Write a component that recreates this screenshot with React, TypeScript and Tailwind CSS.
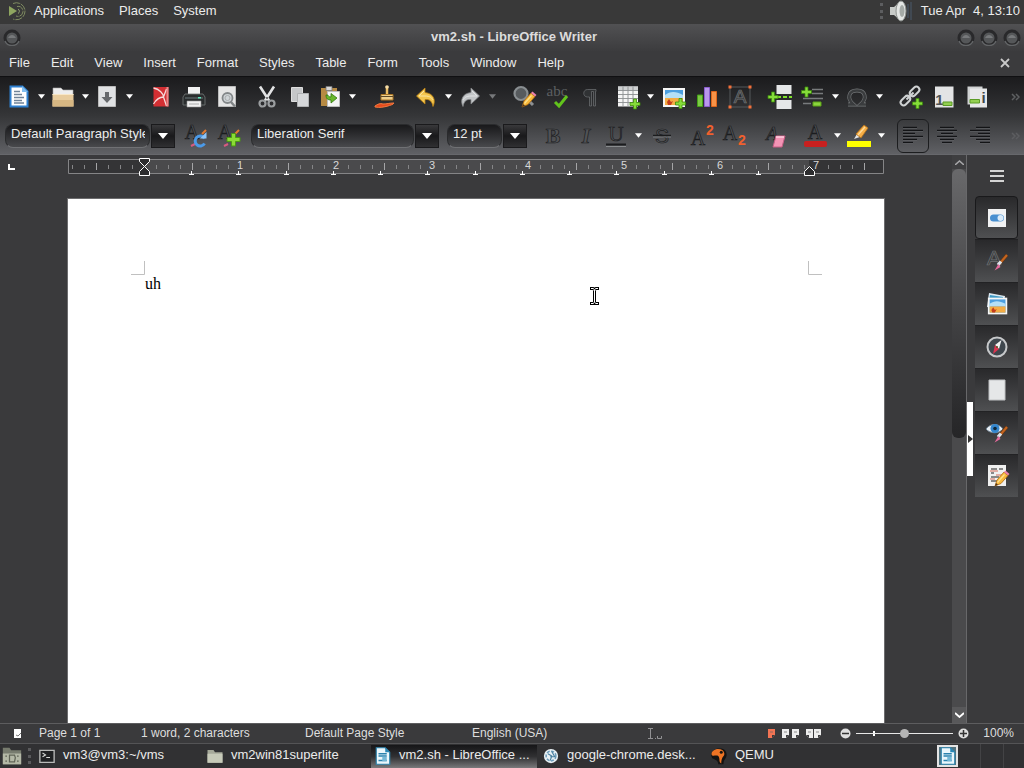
import type { ReactNode } from "react";
import { clsx } from "clsx";

const MENUS = ["File", "Edit", "View", "Insert", "Format", "Styles", "Table", "Form", "Tools", "Window", "Help"];

function Svg({ children, size = 24 }: { children: ReactNode; size?: number }) {
  return (
    <svg width={size} height={size} viewBox="0 0 24 24" fill="none" aria-hidden="true" className="shrink-0 overflow-visible">
      {children}
    </svg>
  );
}

function Plus({ x, y }: { x: number; y: number }) {
  return (
    <path
      d={`M${x - 1.5} ${y - 5}h3v3.5h3.5v3h-3.5v3.5h-3v-3.5h-3.5v-3h3.5z`}
      fill="#86dc3a"
      stroke="#3c8a0c"
      strokeWidth="0.8"
    />
  );
}

function Brush() {
  return (
    <g>
      <path d="M22 6l-8 9" stroke="#5a3417" strokeWidth="3.4" />
      <path d="M22 6l-6 7" stroke="#c4641f" strokeWidth="2.2" />
      <path d="M16 12.5l-3 3.5" stroke="#dde3ea" strokeWidth="3.2" />
      <path d="M13.5 15l-4 6.5 6-3.5z" fill="#e56a9c" />
    </g>
  );
}

function Pencil() {
  return (
    <g>
      <path d="M10 22l2-6 7-8 4 3.5-7 8z" fill="#f8b93c" stroke="#b06a10" strokeWidth="0.8" />
      <path d="M12.5 18.5l7-8" stroke="#fde28e" strokeWidth="1.2" />
      <path d="M19 8l1.5-1.5 4 3.5-1.5 1.5z" fill="#ee82ad" />
      <path d="M10 22l1-3 2 1.8z" fill="#4a3420" />
    </g>
  );
}

function Photo() {
  return (
    <g>
      <path d="M1 3h22v19H1z" fill="#f7f7f7" />
      <path d="M3 5h18v15H3z" fill="#4c9fe0" />
      <path d="M3 10c5-4 11-4 18 0v3H3z" fill="#b5e0f7" />
      <path d="M3 13h18v7H3z" fill="#f4ad45" />
      <path d="M5 17l2-3 2 3 2-1-2 4H6z" fill="#c43d1c" />
    </g>
  );
}

type GlyphProps = { x: number; y: number; size: number; children: string; className?: string; light?: boolean; sans?: boolean };

// Outlined letters, dark rim on the bright toolbar and bright rim on the dark one
function Glyph({ x, y, size, children, className, light, sans }: GlyphProps) {
  return (
    <text
      x={x}
      y={y}
      fontSize={size}
      textAnchor="middle"
      className={clsx(sans ? "font-['Liberation_Sans',sans-serif]" : "font-['Liberation_Serif',serif]", className)}
      fill={light ? "#3a3c3e" : "#505255"}
      stroke={light ? "#6f7274" : "#1b1c1e"}
      strokeWidth="0.7"
    >
      {children}
    </text>
  );
}

const newDocIcon = (
  <Svg>
    <path d="M3.5 1.5h12l5 5v15h-17z" fill="#fff" stroke="#2f80d0" strokeWidth="2" />
    <path d="M15 1v6h6z" fill="#83bff0" />
    <path d="M7 6.5h6M7 9.5h8M7 12.5h10M7 15.5h8M7 18h10" stroke="#708398" strokeWidth="1.3" />
  </Svg>
);

const folderIcon = (
  <Svg>
    <path d="M2 3h8l2 2h10v5H2z" fill="#eee" stroke="#aaa" strokeWidth="0.6" />
    <path d="M1.5 9h21v12.5h-21z" fill="#e8cc9e" />
    <path d="M1.5 15h21v6.5h-21z" fill="#d7b783" />
    <path d="M1.5 9.5h21" stroke="#f8e7c8" />
  </Svg>
);

const saveIcon = (
  <Svg>
    <path d="M3.5 1.5h17v20h-17z" fill="#e0e2e4" stroke="#bbb" />
    <path d="M10 7h4v5h3.5L12 18l-5.5-6H10z" fill="#66696c" />
  </Svg>
);

const pdfIcon = (
  <Svg>
    <path d="M4.5 2h15v19.5h-15z" fill="#d32f33" />
    <path d="M4.5 3c6 1 10 6 10 9M4.5 19c3-5 6-7 10-7M14.5 12l3 9M14.5 12l3-8" stroke="#f4dada" strokeWidth="1.3" />
    <path d="M17.5 2h2v19.5h-2z" fill="#e9888a" />
  </Svg>
);

const printIcon = (
  <Svg>
    <path d="M6 2h12v8H6z" fill="#f2f2f2" />
    <path d="M3 9h18l2 3v8H1v-8z" fill="#2a2d2e" stroke="#73787a" strokeWidth="0.8" />
    <path d="M3 12h18v2H3z" fill="#4b5355" />
    <path d="M16 12h3v1.5h-3z" fill="#5ce8bd" />
    <path d="M5 16h14v6H5z" fill="#f1f1f1" stroke="#999" strokeWidth="0.6" />
    <path d="M7 19h10" stroke="#aaa" />
  </Svg>
);

const previewIcon = (
  <Svg>
    <path d="M3.5 1.5h17v20h-17z" fill="#e5e5e5" stroke="#bcbcbc" />
    <circle cx="12.5" cy="13" r="5" fill="#cfd4d7" stroke="#838789" strokeWidth="1.8" />
    <circle cx="12.5" cy="13" r="2.5" stroke="#a9acae" />
    <path d="M16 17l4 4.5" stroke="#808486" strokeWidth="2.4" />
  </Svg>
);

const cutIcon = (
  <Svg>
    <path d="M5 1.5l9 14M19 1.5l-9 14" stroke="#e3e4e5" strokeWidth="2.6" />
    <path d="M12 12v2" stroke="#555" strokeWidth="1.5" />
    <circle cx="7.5" cy="18.5" r="3" stroke="#9b9ea0" strokeWidth="2.2" />
    <circle cx="16.5" cy="18.5" r="3" stroke="#9b9ea0" strokeWidth="2.2" />
  </Svg>
);

const copyIcon = (
  <Svg>
    <path d="M3.5 2.5h11v14h-11z" fill="#c5c7c9" stroke="#dedede" />
    <path d="M9.5 8.5h11v13h-11z" fill="#d6d8da" stroke="#b0b2b4" />
  </Svg>
);

const pasteIcon = (
  <Svg>
    <path d="M3 3h16v18H3z" fill="#b68a43" />
    <path d="M8 1.5h6v4H8z" fill="#d8d8d8" stroke="#777" strokeWidth="0.8" />
    <path d="M9.5 6.5h12v15h-12z" fill="#f5f5f5" stroke="#bdbdbd" />
    <path d="M8 10c0 4 2 5 5 5v3l6-5-6-4.5V12c-2 0-3-1-3-2z" fill="#68b72c" stroke="#31780e" strokeWidth="0.8" />
  </Svg>
);

const cloneIcon = (
  <Svg>
    <path d="M13 1v9" stroke="#edbd63" strokeWidth="2.5" />
    <circle cx="13" cy="2" r="1.8" fill="#f5dda7" />
    <path d="M7 9.5h12v5.5H7z" fill="#efcf8b" stroke="#a87425" />
    <path d="M7 11.5h12" stroke="#5b4828" />
    <path d="M1 21c3-2 5-3 8-2 4 0 6-1 11-1-1 2-4 2-6 3-4 1-8 2-13 1z" fill="#e54a1c" stroke="#f07a40" />
  </Svg>
);

const undoIcon = (
  <Svg>
    <path d="M11 3L2.5 11l8.5 8v-4.5c5-.5 7 2 8 7 3-6 1-13-8-14z" fill="#f4c64e" stroke="#bd8314" strokeWidth="0.8" />
    <path d="M10 6l-5 5h6c5 0 7 2 8 4" stroke="#fbe7a4" />
  </Svg>
);

const redoIcon = (
  <Svg>
    <path d="M13 3l8.5 8-8.5 8v-4.5c-5-.5-7 2-8 7-3-6-1-13 8-14z" fill="#c2c5c7" stroke="#85888a" strokeWidth="0.8" />
    <path d="M14 6l5 5h-6c-5 0-7 2-8 4" stroke="#e2e4e5" />
  </Svg>
);

const findIcon = (
  <Svg>
    <circle cx="9" cy="8.5" r="6.5" fill="#575b5e" stroke="#898e91" strokeWidth="2.2" />
    <path d="M14 13l7 7" stroke="#8c8f91" strokeWidth="3" />
    <Pencil />
  </Svg>
);

const spellIcon = (
  <Svg>
    <text x="12" y="11" fontSize="15" textAnchor="middle" fill="#5c5f61" className="font-['Liberation_Serif',serif]">
      abc
    </text>
    <path d="M10 17l4 4 8-10" stroke="#62c41c" strokeWidth="3" />
  </Svg>
);

const pilcrowIcon = (
  <Svg>
    <path d="M18 4.5H9.5c-5 0-5 7.500 0 7.500h2v9h2V6.500h2V21h2V6.500H18z" fill="#303234" stroke="#707375" strokeWidth="0.7" />
  </Svg>
);

const tableIcon = (
  <Svg>
    <path d="M2 1.5h20v20H2z" fill="#f5f5f5" />
    <path d="M2 1.5h20v4H2z" fill="#cfd1d2" />
    <path d="M2 5.5h20M2 9.5h20M2 13.5h20M2 17.5h20M7 1.5v20M12 1.5v20M17 1.5v20" stroke="#8b8e90" strokeWidth="0.9" />
    <Plus x={19} y={19} />
  </Svg>
);

const imageIcon = (
  <Svg>
    <Photo />
    <Plus x={18.5} y={18.5} />
  </Svg>
);

const chartIcon = (
  <Svg>
    <path d="M2.5 10h5v11.5h-5z" fill="#7cca45" stroke="#45a017" />
    <path d="M9.5 2.5h5v19h-5z" fill="#b998eb" stroke="#8c5ed0" />
    <path d="M16.5 6.5h5v15h-5z" fill="#f79348" stroke="#de651a" />
  </Svg>
);

const textBoxIcon = (
  <Svg>
    <path d="M2 2h20v20H2z" stroke="#55585a" />
    <Glyph x={12} y={18} size={19} light sans>A</Glyph>
    <path d="M.5 .5h3v3h-3zM20.5 .5h3v3h-3zM.5 20.5h3v3h-3zM20.5 20.5h3v3h-3z" fill="#f3703a" />
  </Svg>
);

const pageBreakIcon = (
  <Svg>
    <path d="M8.5 0h15v9h-15zM8.5 15h15v9h-15z" fill="#e5e7e8" />
    <path d="M9 12h15" stroke="#7ee02c" strokeWidth="2.2" strokeDasharray="4 2" />
    <Plus x={5} y={12} />
  </Svg>
);

const fieldIcon = (
  <Svg>
    <path d="M11 4.5h11M11 8.5h11M2 13.5h20M2 18.5h8" stroke="#787b7d" strokeWidth="1.4" />
    <path d="M12 17h8v4h-8z" fill="#8bd33e" stroke="#5ca517" />
    <Plus x={5.5} y={7} />
  </Svg>
);

const omegaIcon = (
  <Svg>
    <path d="M3 19.5h5.5c-7-6-5-14 3.5-14s10.5 8 3.5 14H21" stroke="#75787a" strokeWidth="3.8" />
    <path d="M3 19.5h5.5c-7-6-5-14 3.5-14s10.5 8 3.5 14H21" stroke="#3a3c3e" strokeWidth="2.6" />
  </Svg>
);

const linkIcon = (
  <Svg>
    <g transform="rotate(-45 11 11)" stroke="#d0d3d4" strokeWidth="2">
      <rect x="-1" y="8" width="11" height="6" rx="3" />
      <rect x="12" y="8" width="11" height="6" rx="3" />
      <path d="M6 11h10" />
    </g>
    <Plus x={18.5} y={18.5} />
  </Svg>
);

const footnoteIcon = (
  <Svg>
    <path d="M3 1.5h18.5v21H3z" fill="#e3e4e5" />
    <text x="7.5" y="20" fontSize="15" fontWeight="bold" textAnchor="middle" fill="#4e5356">1</text>
    <path d="M11 17h9v3.5h-9z" fill="#93cf51" stroke="#5b9b25" />
  </Svg>
);

const endnoteIcon = (
  <Svg>
    <path d="M2.5 1.5h15v18h-15z" fill="#d0d2d3" />
    <path d="M5 3.5h17v19H5z" fill="#e7e8e9" />
    <text x="18.5" y="18" fontSize="15" fontWeight="bold" textAnchor="middle" fill="#3f4447">i</text>
    <path d="M5 14.5h9.5V18H5z" fill="#93cf51" stroke="#5b9b25" />
  </Svg>
);

const updateStyleIcon = (
  <Svg>
    <Glyph x={8} y={15} size={20}>A</Glyph>
    <path d="M18 10l4-4" stroke="#e07a30" strokeWidth="2" />
    <path d="M7 22l4-2" stroke="#d85b80" strokeWidth="2" />
    <path d="M20.5 14.5a5 5 0 1 0 0 5" stroke="#4b9ae8" strokeWidth="3" />
    <path d="M16 14.5h6.5V8z" fill="#8cc4f8" />
  </Svg>
);

const newStyleIcon = (
  <Svg>
    <Glyph x={8} y={15} size={20}>A</Glyph>
    <path d="M18 10l4-4" stroke="#e07a30" strokeWidth="2" />
    <path d="M7 22l4-2" stroke="#d85b80" strokeWidth="2" />
    <path d="M14.5 9.5h4v4h4.5v4h-4.5V22h-4v-4.5H10v-4h4.500z" fill="#8bdc36" stroke="#4b9b13" />
  </Svg>
);

const boldIcon = (
  <Svg>
    <Glyph x={12} y={19} size={22} className="font-bold">B</Glyph>
  </Svg>
);

const italicIcon = (
  <Svg>
    <Glyph x={12} y={19} size={22} className="font-bold italic">I</Glyph>
  </Svg>
);

const underlineIcon = (
  <Svg>
    <Glyph x={12} y={17} size={21}>U</Glyph>
    <path d="M2 20.5h20" stroke="#1b1c1e" strokeWidth="2" />
    <path d="M2 22.5h20" stroke="#898c8e" />
  </Svg>
);

const strikeIcon = (
  <Svg>
    <Glyph x={12} y={19} size={21} sans>S</Glyph>
    <path d="M3 11.5h18" stroke="#1b1c1e" strokeWidth="1.5" />
    <path d="M3 13h18" stroke="#7c7f81" />
  </Svg>
);

const superIcon = (
  <Svg>
    <Glyph x={8} y={21} size={20}>A</Glyph>
    <text x="20" y="11" fontSize="14" fontWeight="bold" textAnchor="middle" fill="#f0602d">2</text>
  </Svg>
);

const subIcon = (
  <Svg>
    <Glyph x={7} y={16} size={20}>A</Glyph>
    <text x="19" y="21" fontSize="14" fontWeight="bold" textAnchor="middle" fill="#f0602d">2</text>
  </Svg>
);

const clearIcon = (
  <Svg>
    <Glyph x={9} y={16} size={19} className="italic">A</Glyph>
    <path d="M13 12h9l-3 11h-9z" fill="#f394b5" stroke="#c95f86" />
    <path d="M13 13h8" stroke="#ffd2e2" strokeWidth="1.5" />
  </Svg>
);

const fontColorIcon = (
  <Svg>
    <Glyph x={12} y={15} size={20}>A</Glyph>
    <rect x="1" y="17" width="23" height="6" rx="2" fill="#c8201f" />
  </Svg>
);

const highlightIcon = (
  <Svg>
    <path d="M7 15l3-5 3 3z" fill="#e4e4e4" />
    <path d="M9 10l8-9 4 3-7 10z" fill="#f6ae46" stroke="#b4711a" strokeWidth="0.8" />
    <path d="M11 11l7-8" stroke="#ffdc9b" strokeWidth="1.3" />
    <path d="M0 17h24v6H0z" fill="#ff0" />
  </Svg>
);

function AlignIcon({ mode }: { mode: "left" | "center" | "right" }) {
  const widths = [14, 20, 12, 20, 14, 10];
  return (
    <Svg>
      {widths.map((w, i) => {
        const x = mode === "left" ? 2 : mode === "center" ? 12 - w / 2 : 22 - w;
        return (
          <g key={i}>
            <path d={`M${x} ${3.5 + i * 3}h${w}`} stroke="#131416" strokeWidth="1.4" />
            <path d={`M${x} ${4.5 + i * 3}h${w}`} stroke="#696c6f" strokeWidth="0.6" />
          </g>
        );
      })}
    </Svg>
  );
}

type Tool = { label: string; icon?: ReactNode; gap?: string; dim?: boolean };

// Tools without an icon are the drop-down arrows of the tool before them
const STANDARD: Tool[] = [
  { label: "New", icon: newDocIcon, gap: "ml-0" },
  { label: "New options" },
  { label: "Open", icon: folderIcon, gap: "ml-1" },
  { label: "Open options" },
  { label: "Save", icon: saveIcon, gap: "ml-1" },
  { label: "Save options" },
  { label: "Export as PDF", icon: pdfIcon, gap: "ml-3.5" },
  { label: "Print", icon: printIcon },
  { label: "Print preview", icon: previewIcon },
  { label: "Cut", icon: cutIcon, gap: "ml-4" },
  { label: "Copy", icon: copyIcon },
  { label: "Paste", icon: pasteIcon, gap: "ml-1.5" },
  { label: "Paste options" },
  { label: "Clone formatting", icon: cloneIcon, gap: "ml-4" },
  { label: "Undo", icon: undoIcon, gap: "ml-4" },
  { label: "Undo options" },
  { label: "Redo", icon: redoIcon, gap: "ml-1" },
  { label: "Redo options", dim: true },
  { label: "Find and replace", icon: findIcon, gap: "ml-3.5" },
  { label: "Spelling", icon: spellIcon },
  { label: "Formatting marks", icon: pilcrowIcon },
  { label: "Insert table", icon: tableIcon, gap: "ml-3.5" },
  { label: "Table options" },
  { label: "Insert image", icon: imageIcon, gap: "ml-1.5" },
  { label: "Insert chart", icon: chartIcon },
  { label: "Insert text box", icon: textBoxIcon },
  { label: "Insert page break", icon: pageBreakIcon, gap: "ml-4" },
  { label: "Insert field", icon: fieldIcon },
  { label: "Field options" },
  { label: "Special character", icon: omegaIcon, gap: "ml-1" },
  { label: "Special character options" },
  { label: "Insert hyperlink", icon: linkIcon, gap: "ml-3.5" },
  { label: "Insert footnote", icon: footnoteIcon },
  { label: "Insert endnote", icon: endnoteIcon },
];

const FORMATTING: Tool[] = [
  { label: "Bold", icon: boldIcon, gap: "ml-3.5" },
  { label: "Italic", icon: italicIcon },
  { label: "Underline", icon: underlineIcon, gap: "ml-1.5" },
  { label: "Underline options" },
  { label: "Strikethrough", icon: strikeIcon, gap: "ml-1.5" },
  { label: "Superscript", icon: superIcon, gap: "ml-4" },
  { label: "Subscript", icon: subIcon },
  { label: "Clear formatting", icon: clearIcon, gap: "ml-4" },
  { label: "Font color", icon: fontColorIcon, gap: "ml-4" },
  { label: "Font color options" },
  { label: "Highlighting", icon: highlightIcon, gap: "ml-1" },
  { label: "Highlighting options" },
];

function ToolButton({ label, icon, gap, dim }: Tool) {
  if (!icon) {
    return (
      <button type="button" aria-label={label} className="ml-1 flex h-6 w-3 shrink-0 items-center justify-center">
        <svg width="7" height="5" viewBox="0 0 8 5" className={dim ? "text-[#77797b]" : "text-white"}>
          <path d="M0 0h8L4 5z" fill="currentColor" />
        </svg>
      </button>
    );
  }
  return (
    <button type="button" aria-label={label} className={clsx("h-6 w-6 shrink-0", gap ?? "ml-[9px]")}>
      {icon}
    </button>
  );
}

function Combo({ label, value, className }: { label: string; value: string; className: string }) {
  return (
    <div className={clsx("flex h-6 shrink-0 gap-px", className)}>
      <input
        type="text"
        aria-label={label}
        defaultValue={value}
        className="min-w-0 flex-1 rounded-lg border border-[#2a2b2d] border-b-[#707174] bg-linear-to-b from-[#19191b] to-[#48494c] pr-1 pb-1 pl-[5px] text-[13px] text-[#ececec] outline-none"
      />
      <button
        type="button"
        aria-label={label + " list"}
        className="flex w-6 shrink-0 items-center justify-center border border-[#1a1a1c] bg-linear-to-b from-[#39393b] via-[#19191b] to-[#303032]"
      >
        <svg width="10" height="6" viewBox="0 0 10 6">
          <path d="M0 0h10L5 6z" fill="#fff" />
        </svg>
      </button>
    </div>
  );
}

function Overflow({ dim }: { dim?: boolean }) {
  return (
    <button type="button" aria-label="More tools" className={clsx("ml-auto pr-1", dim ? "text-[#5c5d60]" : "text-[#5e6062]")}>
      <svg width="9" height="8" viewBox="0 0 9 8" fill="none" stroke="currentColor" strokeWidth="1.5">
        <path d="M1 1l3 3-3 3M5 1l3 3-3 3" />
      </svg>
    </button>
  );
}

function WindowDot({ label }: { label: string }) {
  return (
    <button type="button" aria-label={label} className="h-5 w-5">
      <svg width="20" height="20" viewBox="0 0 20 20" fill="none">
        <circle cx="10" cy="10" r="7" fill="#555759" stroke="#29292b" strokeWidth="3" />
        <path d="M3 13c2 6 12 6 14 0" stroke="#626466" strokeWidth="1.5" />
        <path d="M6 10c2-4 6-4 8 0z" fill="#77797b" />
      </svg>
    </button>
  );
}

function TopPanel() {
  return (
    <header className="flex h-6 shrink-0 items-center bg-[#393939] pb-0.5 pl-2">
      <svg width="20" height="20" viewBox="0 0 20 20" fill="none" className="mr-1.5 shrink-0" aria-hidden="true">
        <path d="M1 5l8 5-8 5z" fill="#8fa660" />
        <path d="M5 2.500a8.500 8.500 0 1 1 0 15.500M9 5.500a5 5 0 1 1-1 9.500" stroke="#7f8c61" strokeDasharray="7 1" />
        <path d="M10 8a2.500 2.500 0 0 1 0 4.500" stroke="#8e9b70" />
      </svg>
      <nav className="flex gap-[15px]">
        <button type="button">Applications</button>
        <button type="button">Places</button>
        <button type="button">System</button>
      </nav>
      <div className="ml-auto flex items-center pr-1">
        <span className="mr-1.5 h-4 border-l-3 border-dotted border-[#5d5e60]" />
        <svg width="24" height="24" viewBox="0 0 24 24" className="mr-2" role="img" aria-label="Volume">
          <path d="M1 8h5v8H1zM5 8l7-6v20l-7-6z" fill="#c8cbc8" />
          <ellipse cx="12" cy="12" rx="5" ry="10" fill="#e4e6e4" stroke="#8d918e" />
          <ellipse cx="13" cy="12" rx="2.5" ry="6" fill="#a5aaa6" />
          <path d="M19 5v14M22 3v18" stroke="#4a5b6c" />
        </svg>
        <time className="whitespace-pre">Tue Apr  4, 13:10</time>
      </div>
    </header>
  );
}

function TitleBar() {
  return (
    <div className="grid h-[27px] shrink-0 grid-cols-[1fr_auto_1fr] items-center bg-linear-to-b from-[#515153] to-[#3c3c3e] px-0.5">
      <div className="flex">
        <WindowDot label="Window menu" />
      </div>
      <h1 className="pb-0.5 pl-1 font-bold text-[#dcdcdc]">vm2.sh - LibreOffice Writer</h1>
      <div className="flex justify-end gap-[3px]">
        <WindowDot label="Minimize" />
        <WindowDot label="Maximize" />
        <WindowDot label="Close" />
      </div>
    </div>
  );
}

function MenuBar() {
  return (
    <nav className="flex h-[26px] shrink-0 items-center border-b border-[#101012] bg-[#3b3b3d] px-[9px] pb-0.5">
      <div className="flex gap-[21px]">
        {MENUS.map((m) => (
          <button key={m} type="button">
            {m}
          </button>
        ))}
      </div>
      <button type="button" aria-label="Close document" className="ml-auto px-[5px]">
        <svg width="10" height="10" viewBox="0 0 10 10" stroke="#c9c9c9" strokeWidth="1.8">
          <path d="M1 1l8 8M9 1L1 9" />
        </svg>
      </button>
    </nav>
  );
}

function Toolbars() {
  return (
    <div className="flex shrink-0 flex-col border-b border-[#67686c] bg-linear-to-b from-[#1b1b1d] via-[#353638] to-[#606165]">
      <div className="flex h-10 items-center pb-px pl-[7px]">
        {STANDARD.map((t) => (
          <ToolButton key={t.label} {...t} />
        ))}
        <Overflow />
      </div>
      <div className="flex h-[37px] items-center pl-[5px]">
        <Combo label="Paragraph style" value="Default Paragraph Style" className="w-[170px]" />
        <ToolButton label="Update style" icon={updateStyleIcon} />
        <ToolButton label="New style" icon={newStyleIcon} />
        <Combo label="Font name" value="Liberation Serif" className="ml-2.5 w-[188px]" />
        <Combo label="Font size" value="12 pt" className="ml-2 w-20" />
        {FORMATTING.map((t) => (
          <ToolButton key={t.label} {...t} />
        ))}
        <button
          type="button"
          aria-label="Align left"
          aria-pressed="true"
          className="ml-2.5 flex h-[34px] w-8 shrink-0 items-center justify-center rounded-md border border-[#1c1d1f]"
        >
          <AlignIcon mode="left" />
        </button>
        <ToolButton label="Center" icon={<AlignIcon mode="center" />} gap="ml-1.5" />
        <ToolButton label="Align right" icon={<AlignIcon mode="right" />} />
        <Overflow dim />
      </div>
    </div>
  );
}

function Ruler() {
  const ticks = Array.from({ length: 67 }, (_, i) => i - 6);
  const tabs = Array.from({ length: 13 }, (_, i) => 123 + Math.round(i * 47.25));
  return (
    <svg width="816" height="20" viewBox="0 0 816 20" fill="none" role="img" aria-label="Ruler">
      <path d="M.5 2.500h815v14H.5z" fill="#343436" stroke="#858587" />
      <path d="M76 3h665v13H76z" fill="#4a4a4c" />
      {ticks.map((i) => {
        if (i >= 0 && i % 8 === 0) return null;
        const half = i % 4 === 0;
        return <path key={i} d={`M${76.5 + i * 12} ${half ? 6 : 8}v${half ? 7 : 4}`} stroke={half ? "#a5a5a7" : "#858587"} />;
      })}
      {[1, 2, 3, 4, 5, 6, 7].map((n) => (
        <text key={n} x={76 + n * 96} y="12" fontSize="11" textAnchor="middle" fill="#d8d8d8">
          {n}
        </text>
      ))}
      {tabs.map((x) => (
        <path key={x} d={`M${x + 0.5} 14v3M${x - 2} 17.500h5`} stroke="#fff" />
      ))}
      <path d="M71.500 1.500h10v3l-5 5-5-5zM71.500 18.500h10v-4l-5-5-5 5z" fill="#2d2d2f" stroke="#fff" />
      <path d="M736.500 18.500h10v-4l-5-5-5 5z" fill="#2d2d2f" stroke="#fff" />
    </svg>
  );
}

function DocumentArea() {
  return (
    <main className="flex min-w-0 flex-1 flex-col bg-[#3a3a3c]">
      <div className="grid shrink-0 grid-cols-[1fr_auto_1fr] pt-0.5">
        <button type="button" aria-label="Tab type" className="pl-2 text-left">
          <svg width="7" height="7" viewBox="0 0 7 7">
            <path d="M0 0h2v4h5v2H0z" fill="#fff" />
          </svg>
        </button>
        <Ruler />
      </div>
      <div className="flex min-h-0 flex-1 justify-center overflow-hidden pt-[21px]">
        <article className="relative w-[818px] border border-b-0 border-[#6c6c6e] bg-white px-[77px] pt-[73px] font-['Liberation_Serif','Times_New_Roman',serif] text-base text-black">
          <p>uh</p>
          <svg width="14" height="14" className="absolute top-[62px] left-[63px]" fill="none" stroke="#c0c0c0">
            <path d="M13.5 0v13.5H0" />
          </svg>
          <svg width="14" height="14" className="absolute top-[62px] right-[62px]" fill="none" stroke="#c0c0c0">
            <path d="M.5 0v13.5H14" />
          </svg>
          <svg width="9" height="18" viewBox="0 0 9 18" className="absolute top-[88px] left-[522px]" fill="none">
            <path d="M0 1.500h3l1.500 1L6 1.500h3M4.500 2v14M0 16.500h3l1.500-1 1.500 1h3" stroke="#000" strokeWidth="3" />
            <path d="M1 1.500h2l1.500 1L6 1.500h2M4.500 3v12M1 16.500h2l1.500-1 1.500 1h2" stroke="#fff" />
          </svg>
        </article>
      </div>
    </main>
  );
}

function Scrollbar() {
  return (
    <div className="flex w-[15px] shrink-0 flex-col border-r border-[#68686a] bg-[#4a4a4c]">
      <button type="button" aria-label="Scroll up" className="flex h-3.5 items-center justify-center bg-[#3e3e40]">
        <svg width="9" height="5" viewBox="0 0 9 5" fill="none" stroke="#a7a7a9" strokeWidth="1.5">
          <path d="M0 5l4.500-4L9 5" />
        </svg>
      </button>
      <div className="min-h-0 flex-1">
        <div className="h-1/2 rounded-md bg-linear-to-b from-[#69696b] via-[#454547] to-[#252527]" />
      </div>
      <button type="button" aria-label="Scroll down" className="flex h-4 items-center justify-center bg-[#58585a]">
        <svg width="9" height="6" viewBox="0 0 9 6" fill="none" stroke="#fff" strokeWidth="1.8">
          <path d="M0 1l4.500 4L9 1" />
        </svg>
      </button>
    </div>
  );
}

const DECKS = [
  {
    label: "Properties",
    icon: (
      <Svg>
        <path d="M3 3h18v18H3z" fill="#f1f2f3" />
        <rect x="5" y="8.5" width="14" height="7" rx="3.5" fill="#488fd0" />
        <circle cx="15.5" cy="12" r="3" fill="#d9eaf8" />
      </Svg>
    ),
  },
  {
    label: "Styles",
    icon: (
      <Svg>
        <Glyph x={9} y={16} size={21} light sans>A</Glyph>
        <Brush />
      </Svg>
    ),
  },
  {
    label: "Gallery",
    icon: (
      <Svg>
        <path d="M4 1l16 3-2 14L2 15z" fill="#dce9f2" />
        <path d="M5 3l13 2v3H4z" fill="#3f9ac6" />
        <g transform="translate(2 3) scale(.88)">
          <Photo />
        </g>
      </Svg>
    ),
  },
  {
    label: "Navigator",
    icon: (
      <Svg>
        <circle cx="12" cy="12" r="9.5" fill="#3f474e" stroke="#c7c9cb" strokeWidth="2" />
        <path d="M16.5 5L14 14l-4-4z" fill="#f0f1f2" />
        <path d="M8 19l2-9 4 4z" fill="#dc3550" />
        <circle cx="12" cy="12" r="1" fill="#552" />
      </Svg>
    ),
  },
  {
    label: "Page",
    icon: (
      <Svg>
        <path d="M4 2h16v20H4z" fill="#e5e7e8" stroke="#bfc1c3" />
      </Svg>
    ),
  },
  {
    label: "Style inspector",
    icon: (
      <Svg>
        <path d="M1 8c4-6 13-6 17 0-4 5-13 5-17 0z" fill="#e9eff4" stroke="#708291" />
        <circle cx="10" cy="7.5" r="4.5" fill="#3587ce" />
        <circle cx="10" cy="7.5" r="1.8" fill="#102839" />
        <Brush />
      </Svg>
    ),
  },
  {
    label: "Manage changes",
    icon: (
      <Svg>
        <path d="M3 1h18v21H3z" fill="#f0f0f0" />
        <path d="M6 5h6M14 5h4M6 9h3M6 13h8M6 17h6" stroke="#666" strokeWidth="1.5" />
        <path d="M5 7h8M11 11h7M5 15h5" stroke="#d66a59" />
        <Pencil />
      </Svg>
    ),
  },
];

function Sidebar() {
  return (
    <aside className="flex w-[57px] shrink-0 bg-[#3a3a3c]">
      <button type="button" aria-label="Hide sidebar" className="flex h-[74px] w-1.5 items-center self-center bg-white">
        <svg width="6" height="8" viewBox="0 0 6 8">
          <path d="M1 0l5 4-5 4z" fill="#333" />
        </svg>
      </button>
      <div className="ml-0.5 flex w-[43px] flex-col">
        <button type="button" aria-label="Sidebar settings" className="flex h-[41px] items-center justify-center">
          <svg width="14" height="12" viewBox="0 0 14 12" stroke="#d4d4d4" strokeWidth="2">
            <path d="M0 1h14M0 6h14M0 11h14" />
          </svg>
        </button>
        {DECKS.map((d, i) => (
          <button
            key={d.label}
            type="button"
            aria-label={d.label}
            className={clsx(
              "flex h-[43px] items-center justify-center bg-linear-to-b from-[#29292b] to-[#4f5052]",
              i === 0 ? "rounded-sm border border-[#19191b]" : "border-t border-[#222224]"
            )}
          >
            {d.icon}
          </button>
        ))}
      </div>
    </aside>
  );
}

function PageViewIcon({ color = "#ededed", flip }: { color?: string; flip?: boolean }) {
  return (
    <svg width="7" height="9" viewBox="0 0 7 9">
      <g transform={flip ? "translate(7 0) scale(-1 1)" : undefined}>
        <path d="M0 0h7v6L4 9H0z" fill={color} />
        <path d="M4 9V6h3z" fill="#3a3a3c" />
        <path d="M2 3h3" stroke="#666" strokeWidth="0.7" />
      </g>
    </svg>
  );
}

function StatusBar() {
  return (
    <footer className="flex h-5 shrink-0 items-center border-t border-[#5d5d5f] bg-[#3a3a3c] pb-px pl-[13px] text-xs text-[#dedede]">
      <svg width="9" height="9" viewBox="0 0 9 9" className="mr-[17px] shrink-0" aria-hidden="true">
        <path d="M1 0h7v9H1z" fill="#fff" />
        <path d="M3 6l2 1 3-3" stroke="#777" fill="none" />
      </svg>
      <button type="button" className="w-[102px] text-left">Page 1 of 1</button>
      <button type="button" className="w-[164px] text-left">1 word, 2 characters</button>
      <button type="button" className="w-[167px] text-left">Default Page Style</button>
      <button type="button" className="text-left">English (USA)</button>
      <div className="ml-auto flex items-center pr-2.5">
        <button type="button" aria-label="Selection mode" className="mr-[106px]">
          <svg width="14" height="11" viewBox="0 0 14 11" fill="none" stroke="#929294">
            <path d="M0 .5h5M2.5 .5v10M0 10.5h5M7 10.5h1M9.5 8v2.5h4V8" />
          </svg>
        </button>
        <button type="button" aria-label="Single page view" className="mr-[7px]">
          <PageViewIcon color="#f27454" />
        </button>
        <button type="button" aria-label="Multiple page view" className="mr-[7px] flex gap-[3px]">
          <PageViewIcon />
          <PageViewIcon />
        </button>
        <button type="button" aria-label="Book view" className="mr-[19px] flex gap-px">
          <PageViewIcon flip />
          <PageViewIcon />
        </button>
        <button type="button" aria-label="Zoom out">
          <svg width="11" height="11" viewBox="0 0 11 11">
            <circle cx="5.5" cy="5.5" r="5" fill="#dedede" />
            <path d="M2 5.5h7" stroke="#333" strokeWidth="1.5" />
          </svg>
        </button>
        <input
          type="range"
          aria-label="Zoom"
          defaultValue={50}
          className="mx-[5px] h-3 w-[97px] appearance-none bg-[linear-gradient(#e8e8e8,#e8e8e8),linear-gradient(#fff,#fff)] bg-[length:100%_1px,2px_5px] bg-[position:center,17px_center] bg-no-repeat [&::-webkit-slider-thumb]:h-[9px] [&::-webkit-slider-thumb]:w-[9px] [&::-webkit-slider-thumb]:appearance-none [&::-webkit-slider-thumb]:rounded-full [&::-webkit-slider-thumb]:bg-[#b5b5b5]"
        />
        <button type="button" aria-label="Zoom in" className="mr-3.5">
          <svg width="11" height="11" viewBox="0 0 11 11">
            <circle cx="5.5" cy="5.5" r="5" fill="#dedede" />
            <path d="M2 5.5h7M5.5 2v7" stroke="#333" strokeWidth="1.5" />
          </svg>
        </button>
        <button type="button">100%</button>
      </div>
    </footer>
  );
}

const writerIcon = (
  <Svg size={18}>
    <path d="M3 1h12l6 6v16H3z" fill="#eaf7fc" stroke="#2c82ac" strokeWidth="1.5" />
    <path d="M15 1v6h6z" fill="#2887b5" />
    <path d="M6 9h11M6 12h11M6 18h11" stroke="#2982ae" strokeWidth="2" />
    <path d="M11 13h6v6h-6z" fill="#74b8d6" />
  </Svg>
);

const TASKS = [
  {
    label: "vm3@vm3:~/vms",
    icon: (
      <Svg size={18}>
        <path d="M2.5 4.5h19v16h-19z" fill="#202123" stroke="#b9bab9" strokeWidth="1.8" />
        <path d="M6 8l4 2.5L6 13M11 14h5" stroke="#d8dad8" strokeWidth="1.5" />
      </Svg>
    ),
  },
  {
    label: "vm2win81superlite",
    icon: (
      <Svg size={18}>
        <path d="M2 4h8l2 3h10v14H2z" fill="#a6a99a" />
        <path d="M2 9h20v12H2z" fill="#c7cab9" />
      </Svg>
    ),
  },
  { label: "vm2.sh - LibreOffice ...", icon: writerIcon, active: true },
  {
    label: "google-chrome.desk...",
    icon: (
      <Svg size={18}>
        <circle cx="12" cy="12" r="9.5" fill="#e8f0f4" />
        <circle cx="12" cy="12" r="6.5" stroke="#6b9bb9" strokeDasharray="4 2" strokeWidth="2" />
        <path d="M8 9l5 3-2 6M13 6l4 7h-6" stroke="#477f9f" strokeWidth="1.5" />
      </Svg>
    ),
  },
  {
    label: "QEMU",
    icon: (
      <Svg size={18}>
        <path d="M12 2c7-1 11 4 10 10-1 4-4 5-4 11h-7c0-5-4-6-8-8C-1 8 5 2 12 2z" fill="#141312" />
        <path d="M8 3c6-1 10 1 11 5 1 5-4 4-4 14-4-2-1-7-4-10C8 10 2 14 2 9c0-3 3-5 6-6z" fill="#ee7424" />
        <circle cx="15" cy="7" r="2" fill="#191512" />
      </Svg>
    ),
  },
];

function Taskbar() {
  return (
    <div className="flex h-[25px] shrink-0 items-center border-t border-[#545456] bg-[#313133] pl-0.5">
      <button type="button" aria-label="Show desktop" className="h-5 w-5">
        <Svg size={20}>
          <path d="M1 2h8l2 3h12v17H1z" fill="#777b6e" />
          <path d="M1 9h22v13H1z" fill="#b4b8a6" />
          <path d="M9 11h6l1 3-1 5H9zM4 12h2M18 12h2M4 18h2M18 18h2" stroke="#606457" strokeWidth="1.5" />
        </Svg>
      </button>
      <span className="mr-1 ml-1.5 h-4 border-l-3 border-dotted border-[#5a5a5c]" />
      {TASKS.map((t) => (
        <button
          key={t.label}
          type="button"
          className={clsx(
            "mr-0.5 flex h-[23px] w-[166px] items-center gap-[7px] pl-[3px] text-left whitespace-nowrap",
            t.active && "bg-linear-to-b from-[#161618] via-[#303032] to-[#7a7a7c]"
          )}
        >
          {t.icon}
          <span className="pb-0.5">{t.label}</span>
        </button>
      ))}
      <div className="ml-auto flex h-full items-center gap-[22px] pr-5">
        <button type="button" aria-label="Workspace 1" className="flex h-[22px] w-[21px] items-center justify-center border-2 border-[#e4e4e4] bg-[#53737f]">
          {writerIcon}
        </button>
        <span className="h-full w-px bg-[#434345]" />
        <span className="h-full w-px bg-[#434345]" />
      </div>
    </div>
  );
}

export default function App() {
  return (
    <div className="flex h-screen flex-col overflow-hidden bg-[#3a3a3c] font-['Liberation_Sans',Arial,sans-serif] text-[13px] leading-4 text-[#ececec]">
      <TopPanel />
      <TitleBar />
      <MenuBar />
      <Toolbars />
      <div className="flex min-h-0 flex-1">
        <DocumentArea />
        <Scrollbar />
        <Sidebar />
      </div>
      <StatusBar />
      <Taskbar />
    </div>
  );
}
